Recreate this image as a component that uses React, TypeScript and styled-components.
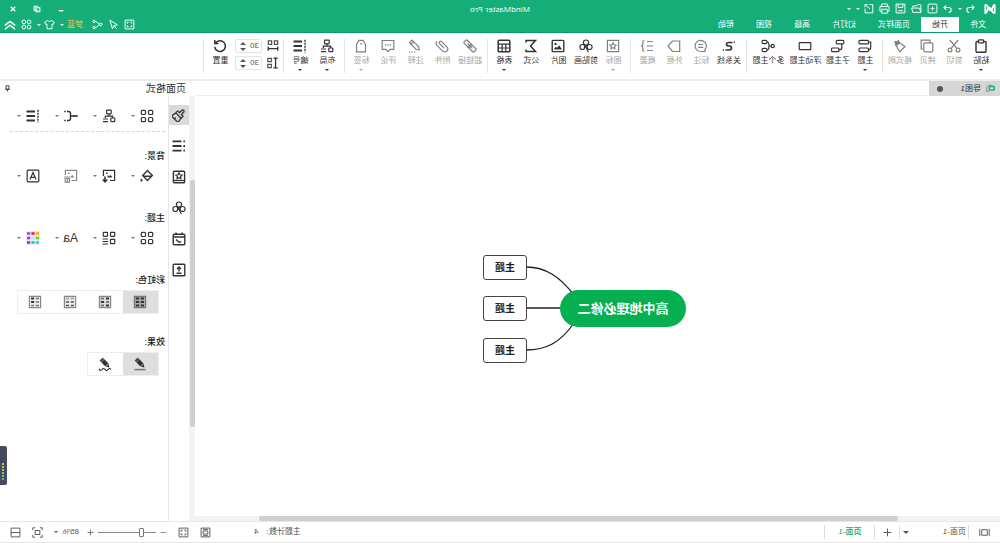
import React from "react";
import styled, { createGlobalStyle, css } from "styled-components";

const GlobalStyle = createGlobalStyle`
  * { box-sizing: border-box; }
  body {
    margin: 0;
    background: #fff;
    color: #333;
    font: 8px/12px "Liberation Sans", "Noto Sans CJK SC", sans-serif;
  }
  button, input, select {
    margin: 0;
    padding: 0;
    border: 0;
    background: none;
    color: inherit;
    font: inherit;
  }
`;

/* ---------- icons, drawn on a 14 unit grid ---------- */

const clover = (
  <>
    <circle cx="7" cy="3.6" r="2.6" />
    <circle cx="3.4" cy="8" r="2.5" />
    <circle cx="10.6" cy="8" r="2.5" />
    <path d="M5 5.500 9 9M9 5.500 6.500 9q-.3 2.500-2 4" />
  </>
);
const fourSquares = (
  <>
    <rect x="1.3" y="1.3" width="4.2" height="4.2" rx="1" />
    <rect x="8.5" y="1.3" width="4.2" height="4.2" rx="1" />
    <rect x="1.3" y="8.5" width="4.2" height="4.2" rx="1" />
    <rect x="8.5" y="8.5" width="4.2" height="4.2" rx="1" />
  </>
);
const orgChart = (
  <>
    <rect x="4.8" y="1.2" width="4.6" height="3.6" rx=".5" />
    <path d="M7 4.8v2.4M3.3 9V7.2h7.4V9M8 10h5M8 12.6h5" />
    <rect x="1.2" y="9" width="4" height="3.6" rx=".5" />
  </>
);
const numbered = (
  <>
    <path strokeWidth="2" d="M5 2.4h8.5M5 7h8.5M5 11.6h8.5" />
    <path strokeWidth="1.4" strokeDasharray="2 1" d="M2 .8v12.6" />
  </>
);
const tableBox = (
  <>
    <rect x="1.200" y="1.200" width="11.600" height="11.600" rx=".8" strokeWidth="1.500" />
    <path d="M1.400 5.200h11.200M1.400 9h11.200M5.200 5v7.600M8.900 5v7.600" />
  </>
);
const chain = (
  <g transform="rotate(-45 7 7)">
    <rect x="0" y="4.8" width="7.6" height="4.4" rx="1" />
    <rect x="6.4" y="4.8" width="7.6" height="4.4" rx="1" />
    <path d="M3.8 7h6.4" />
  </g>
);
const pencil = (
  <>
    <path fill="currentColor" strokeWidth=".6" d="M9.200 1 12 3.600 6.600 9.200 3.800 6.400Z" />
    <path fill="currentColor" stroke="none" d="M3.200 7 6 9.800l-3.400.8Z" />
    <path stroke="#ddd" strokeWidth=".6" d="m8 2.400 2.800 2.700" />
  </>
);
const star = "m7 3.9 1 1.9 2.1.3-1.5 1.5.3 2.1L7 8.7l-1.9 1 .3-2.1-1.5-1.5 2.1-.3Z";
const frame = "M1.4 1.4h11.2v11.2H1.4z";

const ICONS: Record<string, React.ReactNode> = {
  logo: (
    <path
      strokeWidth="2"
      strokeLinejoin="round"
      d="M1.5 2.2v9.6c2 0 3-1.6 4-4s1.6-2.6 3-2.6 1.2 6.6 4 6.6V2.2c-2.2 0-3 1.6-4 4s-1.7 2.6-3 2.6-1.2-6.6-4-6.6Z"
    />
  ),
  redo: <path strokeWidth="1.500" d="M12.500 5H6a3.500 3.500 0 0 0-3.500 3.500Q2.500 11.500 6 12M9.500 1.800 12.700 5l-3.200 3.200" />,
  undo: <path strokeWidth="1.500" d="M1.500 5H8a3.500 3.500 0 0 1 3.500 3.500Q11.500 11.500 8 12M4.500 1.800 1.300 5l3.200 3.200" />,
  newDoc: (
    <>
      <rect x="1.400" y="1.400" width="11.200" height="11.200" rx="1" />
      <path d="M7 4.500v5M4.500 7h5" />
    </>
  ),
  open: <path d="M1.400 12V3q0-1 1-1h3l1.500 1.700h4.700V6M1.400 12l1.800-5.500h10L11.600 12Z" />,
  save: (
    <>
      <path d={frame} />
      <path d="M4 1.400v4.200h6V1.400M4 9.800h6" />
    </>
  ),
  print: (
    <>
      <path d="M3.500 4.500V1.200h7v3.300M3.500 10.500H1.200v-6h11.600v6h-2.300" />
      <path d="M3.500 8h7v5h-7z" />
    </>
  ),
  exportDoc: <path d="M6 2H1.600v10.600h9.800V7M5 7.500 11.500 2M11.500 2H8M11.500 2v3.500" />,
  expand: (
    <>
      <path d={frame} />
      <path d="M4 6V4h2M8 4h2v2M10 8v2H8M6 10H4V8" />
    </>
  ),
  cursor: <path d="m11.500 1.500-9.500 6 4.400.8 2 4.200ZM6.200 8.500l-3 4" />,
  share: (
    <>
      <circle cx="2.800" cy="7" r="1.700" />
      <circle cx="11.500" cy="3" r="1.500" />
      <circle cx="11.500" cy="11" r="1.500" />
      <path d="M4.500 7Q8 3 10 3M4.500 7Q8 11 10 11" />
    </>
  ),
  shirt: <path d="M4.500 2 1 4l1.200 3 1.600-.6V12.500h6.400V6.400l1.600.6L13 4 9.500 2Q7 4.500 4.500 2Z" />,
  circles: (
    <>
      <circle cx="3.700" cy="3.700" r="2.400" />
      <circle cx="10.300" cy="3.700" r="2.400" />
      <circle cx="3.700" cy="10.300" r="2.400" />
      <circle cx="10.300" cy="10.300" r="2.400" />
    </>
  ),
  chevrons: <path strokeWidth="1.700" d="m1 7.500 6-4.700 6 4.700M1 12l6-4.700 6 4.700" />,
  minimize: <path strokeWidth="2.500" d="M3 10h8" />,
  restore: <path strokeWidth="1.800" d="M5 2h7v7H5M2 5h7v7H2z" />,
  close: <path strokeWidth="2.200" d="m3 3 8 8M11 3l-8 8" />,
  paste: (
    <>
      <rect x="2" y="2.500" width="10" height="10.700" rx="1" strokeWidth="1.400" />
      <rect x="4.500" y=".9" width="5" height="3" rx=".6" fill="#fff" />
    </>
  ),
  cut: (
    <>
      <circle cx="3" cy="11" r="1.900" />
      <circle cx="11" cy="11" r="1.900" />
      <path d="m4.200 9.400 7-8.400M9.800 9.400 2.800 1" />
    </>
  ),
  copy: (
    <>
      <rect x="1.200" y="3.800" width="9" height="9" rx="1" />
      <path d="M4 3.500V1.200h8.800V10h-2.400" />
    </>
  ),
  brush: (
    <>
      <path d="m2 7.500 5.600-3.800 3.200 3-3.600 6Z" />
      <path fill="currentColor" d="m7.600 3.600 1-2 1.300 1.500L12 2.500l-.8 3.700Z" />
    </>
  ),
  topic: (
    <>
      <rect x="3.500" y="1.300" width="9.500" height="3.600" rx="1" />
      <rect x="3.500" y="9" width="9.500" height="3.600" rx="1" />
      <path d="M3.500 3H1.300v5.800q0 2 2.200 2" />
    </>
  ),
  subtopic: (
    <>
      <rect x="1.200" y="1.300" width="7.500" height="3.600" rx="1" />
      <rect x="6" y="9" width="7.500" height="3.600" rx="1" />
      <path d="M3.200 5v3.800q0 2 2.800 2" />
    </>
  ),
  floating: <rect x="1.200" y="3.600" width="11.600" height="7" rx=".6" />,
  multiple: (
    <>
      <circle cx="2.300" cy="7" r="1.600" />
      <rect x="8" y="1.300" width="5" height="3.400" rx="1.500" />
      <rect x="8" y="9.300" width="5" height="3.400" rx="1.500" />
      <path d="M4 7h2M8 3Q6 3 6 7t2 4" />
    </>
  ),
  relation: (
    <>
      <path strokeWidth="1.700" d="M3.500 3.500H7q2.500 0 2.500 1.700T7 7 4.500 8.900 7 11h3.500" />
      <path strokeWidth="1.700" d="M1 3h1.200M12 11h1.200" />
    </>
  ),
  callout: (
    <>
      <path d="M3 12.500h4.500A5.600 5.600 0 1 0 3 10.500Z" />
      <path d="M4.800 5.500h5M4.800 8.300h5" />
    </>
  ),
  boundary: <path d="M1.300 2h7.200L13 7l-4.500 5.500H1.300z" />,
  summary: <path d="M1 2.500h6M1 7h6M1 11.500h6M9.500 1.500q1.700 0 1.700 1.700v2q0 1.800 1.800 1.800-1.800 0-1.800 1.800v2q0 1.700-1.700 1.700" />,
  mark: (
    <>
      <path d={frame} />
      <path d={star} />
    </>
  ),
  clipart: clover,
  picture: (
    <>
      <rect x="1.200" y="1.400" width="11.600" height="11.200" rx=".8" strokeWidth="1.400" />
      <path fill="currentColor" stroke="none" d="m3 10.500 2.800-4.200 2.200 2.500 1.400-1 1.800 2.700ZM8.500 4h2v2h-2z" />
    </>
  ),
  formula: <path strokeWidth="1.500" d="M12 3.500V1.500H2.500l5 5.500-5 5.500H12v-2" />,
  table: tableBox,
  link: chain,
  attach: (
    <path
      transform="rotate(-45 7 7)"
      d="M4 7h6.300a1.400 1.400 0 0 0 0-2.800H3a3 3 0 0 0 0 6h8a3 3 0 0 0 2.800-3"
    />
  ),
  note: (
    <g>
      <path d="m10 1.200 2.500 2.300-6.700 7-3 .4.500-3Z" />
      <path d="m8.500 3 2.400 2.200" />
      <path strokeDasharray="1.500 1" d="M6.500 13h7" />
    </g>
  ),
  comment: (
    <>
      <path d="M1.200 1.500h11.600v8.800H9L7 12.600l-2-2.300H1.200z" />
      <path strokeWidth="1.500" strokeDasharray="1.300 1.100" d="M4 6h6" />
    </>
  ),
  tag: (
    <>
      <path d="M2.500 5.500 5 1.400h4l2.500 4.100v7.300h-9z" />
      <path strokeWidth="1.500" d="M7 4v1.500" />
    </>
  ),
  layout: orgChart,
  numbering: numbered,
  reset: <path strokeWidth="1.500" d="M11.400 4A5.400 5.400 0 1 0 12.300 8M12.200 1v3.500H8.600" />,
  hgap: (
    <>
      <rect x="1.500" y="1" width="4" height="4" />
      <rect x="8.500" y="1" width="4" height="4" />
      <path strokeWidth="1.500" d="M1 10h12M1.400 7.500v5M12.600 7.500v5" />
    </>
  ),
  vgap: (
    <>
      <rect x="9" y="1.500" width="4" height="4" />
      <rect x="9" y="8.500" width="4" height="4" />
      <path strokeWidth="1.500" d="M4 1v12M1.500 1.400h5M1.500 12.600h5" />
    </>
  ),
  pin: <path strokeWidth="1.800" d="M4 1.500h6v7H4zM2.500 8.700h9M7 9v4" />,
  doc: (
    <>
      <path stroke="#777" d="M4 3q2-2 5-1.500 4 1 4 5v5H9" />
      <rect x="1.200" y="4" width="7.600" height="5.500" rx="1" stroke="#12ae76" strokeWidth="2.200" />
    </>
  ),
  formatBrush: (
    <g transform="rotate(-45 7 7)" strokeWidth="1.300" strokeLinejoin="round">
      <path d="M5.700 5V1.200q1.300-1.600 2.600 0V5h2.500v2.800H3.200V5z" />
      <path d="M3.400 8 2.200 13h9.600L10.600 8M7.500 11v2" />
    </g>
  ),
  list: (
    <>
      <path strokeWidth="1.900" d="M4.500 2.400h9M4.500 7h9M4.500 11.600h9" />
      <path strokeWidth="1.900" d="M1 2.400h1.600M1 7h1.600M1 11.600h1.600" />
    </>
  ),
  starBook: (
    <>
      <rect x="1.400" y="1.200" width="11.200" height="11.600" rx="1" strokeWidth="1.400" />
      <path d={star} transform="translate(0 -1)" />
      <path d="M1.400 10.500h11.200" />
    </>
  ),
  calendar: (
    <>
      <rect x="1.200" y="2.200" width="11.600" height="10.600" rx="1.200" strokeWidth="1.400" />
      <path strokeWidth="1.400" d="M1.200 5h11.600M4 .6v2M10 .6v2M4.800 9.500 6.500 10.500 10 7.500" />
    </>
  ),
  upload: (
    <>
      <rect x="1.200" y="1.200" width="11.600" height="11.600" rx=".8" strokeWidth="1.400" />
      <path strokeWidth="1.400" d="M7 8.500V4.200M5 6l2-2 2 2M4.500 10.200h5" />
    </>
  ),
  grid: fourSquares,
  branch: (
    <>
      <path strokeWidth="1.400" d="M1 7h6M11 2.500H9.500q-2 0-2 2v5q0 2 2 2H11" />
      <path strokeWidth="1.700" d="M.2 7h1.600M12.200 2.500h1.600M12.200 11.500h1.600M4 6.200v1.600" />
    </>
  ),
  fill: (
    <>
      <path strokeWidth="1.400" d="m6.500 1.500 4.800 5-4.800 5-4.800-5Z" />
      <path fill="currentColor" stroke="none" d="M1.700 6.500h9.600L10 8H3Z" />
      <path strokeWidth="1.800" d="M12.500 10v2.500" />
    </>
  ),
  imageDown: (
    <>
      <path d="M6 11.500H1.400V1.400h11.200V7" />
      <path fill="currentColor" stroke="none" d="M3.500 8.500 5.500 6l1.600 1.300L8.500 6v2.500ZM8.500 3.600H10v1.500H8.500z" />
      <path strokeWidth="1.600" d="M11 7.500v5M8.800 10.500l2.200 2.300 2.200-2.300" />
    </>
  ),
  imageTrash: (
    <>
      <path d="M6.500 11.500H1.400V1.400h11.200V6" />
      <path fill="currentColor" stroke="none" d="M3.500 8.500 5.500 6l1.600 1.300V8.500ZM8.500 3.600H10v1.500H8.500z" />
      <path d="M7.500 8h6.300M8.500 9.500h4.300v3.700H8.500zM10.600 10v3" />
    </>
  ),
  letterA: (
    <>
      <rect x="1.200" y="1.200" width="11.600" height="11.600" rx=".8" />
      <path d="m4 10.500 3-7 3 7M5 8.300h4" />
    </>
  ),
  themeList: (
    <>
      <rect x="1.300" y="1.300" width="4.200" height="4" rx=".5" />
      <rect x="8.500" y="1.300" width="4.200" height="4" rx=".5" />
      <rect x="1.300" y="8.300" width="4.200" height="4.400" rx=".5" />
      <path d="M8 8h5.500M8 10.500h5.500M8 13h5.500" />
    </>
  ),
  palette: (
    <g strokeWidth="2.600">
      <path stroke="#ececec" strokeWidth="14" d="M0 7h14" />
      <path stroke="#f7b500" d="M1 2.500h3.200" /><path stroke="#ea1f3c" d="M5.400 2.500h3.200" /><path stroke="#b83cd8" d="M9.800 2.500H13" />
      <path stroke="#5fd52b" d="M1 7h3.200" /><path stroke="#d8d8ee" d="M5.400 7h3.200" /><path stroke="#7d4be6" d="M9.800 7H13" />
      <path stroke="#35cfd9" d="M1 11.500h3.200" /><path stroke="#22b8f0" d="M5.400 11.500h3.200" /><path stroke="#2b62ee" d="M9.800 11.500H13" />
    </g>
  ),
  rainbow1: (
    <>
      <path stroke="#777" fill="#aaa" d={frame} />
      <path strokeWidth="2.200" d="M3 3.500h3.300M7.900 3.500h3.300M3 7h3.300M7.900 7h3.300M3 10.500h3.300M7.900 10.500h3.300" />
    </>
  ),
  rainbow2: (
    <>
      <path stroke="#888" fill="#ddd" d={frame} />
      <path strokeWidth="2.200" d="M3 3.500h3M7.900 7h3.300M3 10.500h3" />
      <path stroke="#777" strokeWidth="2" d="M7.900 3.500h3.300M3 7h3M7.900 10.500h3.300" />
    </>
  ),
  rainbow3: (
    <>
      <path stroke="#888" fill="#eee" d={frame} />
      <path stroke="#aaa" strokeWidth="2" d="M3 3.500h3.300M7.900 3.500h3.300" />
      <path stroke="#555" strokeWidth="1.700" d="M3 7h3.300M7.900 7h3.300M3 10.500h3.300M7.900 10.500h3.300" />
    </>
  ),
  rainbow4: (
    <>
      <path stroke="#888" fill="#eee" d={frame} />
      <path strokeWidth="2.200" d="M7.900 3.500h3M7.900 7h3" />
      <path stroke="#777" strokeWidth="1.700" d="M3 3.500h3.300M3 7h3.300M3 10.500h3.300M7.900 10.500h3" />
    </>
  ),
  penLine: (
    <>
      {pencil}
      <path stroke="#777" strokeWidth="1.500" d="M1.500 12.600h11" />
    </>
  ),
  penWave: (
    <>
      {pencil}
      <path d="M1 12.500q1.500-2 3 0t3 0 3 0 3-.6" />
    </>
  ),
  pages: <path d="M1 2.500v9M13 2.500v9M3.500 3.500h7v7h-7z" />,
  add: <path strokeWidth="1.500" d="M7 1v12M1 7h12" />,
  minus: <path d="M1 7h12" />,
  fitPage: (
    <>
      <path d={frame} />
      <path d="M4 5h6v4H4zM4 3h6M4 11h6" />
    </>
  ),
  focus: (
    <>
      <path d="M1 4V1h3M10 1h3v3M13 10v3h-3M4 13H1v-3" />
      <rect x="4" y="4.500" width="6" height="5" />
    </>
  ),
  fitWidth: (
    <>
      <path d={frame} />
      <path d="M1.400 7h11.200" />
    </>
  ),
};

const Svg = styled.svg<{ $size: number }>`
  display: block;
  flex: none;
  width: ${(p) => p.$size}px;
  height: ${(p) => p.$size}px;
  fill: none;
  stroke: currentColor;
  stroke-width: 1.200;
`;

function Icon({ name, size = 14 }: { name: string; size?: number }) {
  return (
    <Svg viewBox="0 0 14 14" $size={size} aria-hidden="true">
      {ICONS[name]}
    </Svg>
  );
}

const Caret = styled.span<{ $size?: number }>`
  flex: none;
  width: 0;
  height: 0;
  border: ${(p) => p.$size ?? 2}px solid transparent;
  border-bottom: 0;
  border-top-color: currentColor;
`;

/* ---------- window frame ---------- */

/* The whole window is shown as a mirror image. */
const Window = styled.div`
  display: flex;
  flex-direction: column;
  min-height: 100vh;
  position: relative;
  transform: scaleX(-1);
  background: #fff;
`;

const Header = styled.header`
  background: #15ae79;
  border-bottom: 1px solid #0a9c68;
  color: #fff;
`;

const TitleBar = styled.div`
  display: grid;
  grid-template-columns: 1fr auto 1fr;
  align-items: center;
  height: 17px;
`;

const Title = styled.h1`
  margin: 0;
  font: 400 8px/16px "Open Sans", sans-serif;
`;

const QuickTools = styled.div`
  display: flex;
  align-items: center;
  gap: 5px;
  padding-left: 4px;
`;

const Logo = styled.span`
  margin-right: 4px;
`;

const WindowTools = styled.div`
  display: flex;
  justify-content: flex-end;
  gap: 16px;
  padding-right: 9px;
`;

const PlainButton = styled.button`
  display: flex;
  align-items: center;
  gap: 3px;
`;

const MenuBar = styled.nav`
  display: flex;
  justify-content: space-between;
  align-items: stretch;
  height: 15px;
`;

const MenuTabs = styled.div`
  display: flex;
  padding-left: 3px;
`;

const MenuTab = styled.button<{ $active?: boolean }>`
  padding: 0 11px;
  line-height: 15px;
  ${(p) => p.$active && css`
    background: #fff;
    color: #333;
  `}
`;

const MenuTools = styled.div`
  display: flex;
  align-items: center;
  gap: 5px;
  padding-right: 4px;
`;

const Account = styled(PlainButton)`
  margin-left: 4px;
  color: #f2c14e;
  span { color: #fff; }
`;

/* ---------- ribbon ---------- */

const Ribbon = styled.div`
  display: flex;
  height: 48px;
  padding: 6px 0 6px 2px;
  border-bottom: 2px solid #ececec;
`;

const RibbonGroup = styled.div`
  display: flex;
  padding: 0 3px;
  border-right: 1px solid #e3e3e3;
`;

const RibbonItem = styled.button<{ $chars: number }>`
  display: flex;
  flex-direction: column;
  align-items: center;
  width: ${(p) => (p.$chars > 3 ? 37 : p.$chars > 2 ? 28 : 27)}px;
  line-height: 16px;
  white-space: nowrap;
  &:disabled { color: #a5a5a5; }
  &:disabled svg { color: #808080; }
`;

const SpacingFields = styled.div`
  display: flex;
  flex-direction: column;
  gap: 3px;
  padding: 0 1px;
`;

const SpacingField = styled.label`
  display: flex;
  align-items: center;
  gap: 5px;
`;

const Spinner = styled.span`
  display: flex;
  align-items: center;
  width: 27px;
  height: 14px;
  padding: 0 4px 0 2px;
  border: 1px solid #e4e4e4;
  border-radius: 2px;
  color: #555;
  input { flex: 1; min-width: 0; line-height: 12px; }
`;

const Arrows = styled.span`
  display: flex;
  flex-direction: column;
  gap: 3px;
  span:first-child { transform: rotate(180deg); }
`;

/* ---------- document area ---------- */

const Body = styled.div`
  display: flex;
  flex: 1;
`;

const Workspace = styled.main`
  display: flex;
  flex: 1;
  flex-direction: column;
  min-width: 0;
`;

const DocTabs = styled.div`
  height: 15px;
  border-bottom: 1px solid #eee;
`;

const DocTab = styled.button`
  display: flex;
  align-items: center;
  gap: 5px;
  width: 71px;
  height: 15px;
  padding: 0 8px 0 5px;
  background: #d6d6d6;
`;

const Dot = styled.span`
  width: 6px;
  height: 6px;
  margin-left: auto;
  border-radius: 50%;
  background: #555;
`;

const Canvas = styled.div`
  position: relative;
  flex: 1;
  overflow: hidden;
`;

const Links = styled.svg`
  position: absolute;
  left: 0;
  top: 0;
  width: 600px;
  height: 400px;
  fill: none;
  stroke: #222;
  stroke-width: 1.300;
`;

const Topic = styled.div<{ $x: number; $y: number }>`
  position: absolute;
  left: ${(p) => p.$x}px;
  top: ${(p) => p.$y}px;
  width: 44px;
  border: 1px solid #444;
  border-radius: 3px;
  background: #fff;
  color: #222;
  font-size: 10px;
  font-weight: 700;
  line-height: 23px;
  text-align: center;
`;

const CentralTopic = styled(Topic)`
  width: 126px;
  border: 0;
  border-radius: 19px;
  background: #06b050;
  color: #fff;
  font-size: 13px;
  line-height: 37px;
`;

const HScroll = styled.div`
  height: 5px;
  padding: 0 8% 0 12.700%;
  background: #f2f2f2;
`;

const Thumb = styled.div`
  height: 100%;
  border-radius: 2px;
  background: #cfcfcf;
`;

/* ---------- side panel ---------- */

const Side = styled.aside`
  display: flex;
  flex: none;
  flex-direction: column;
  width: 195px;
`;

const SideHeader = styled.div`
  display: flex;
  align-items: center;
  justify-content: space-between;
  height: 15px;
  padding: 0 4px 0 9px;
  font-size: 10px;
`;

const SideBody = styled.div`
  display: flex;
  flex: 1;
`;

const VScroll = styled.div`
  flex: none;
  width: 6px;
  padding: 84px 1px 94px 0;
  background: #f3f3f3;
`;

const ToolRail = styled.div`
  display: flex;
  flex: none;
  flex-direction: column;
  gap: 11px;
  width: 21px;
  padding-top: 9px;
  border-right: 1px solid #e6e6e6;
`;

const RailButton = styled.button<{ $active?: boolean }>`
  display: grid;
  place-items: center;
  width: 20px;
  height: 20px;
  background: ${(p) => (p.$active ? "#d9d9d9" : "none")};
`;

const Panel = styled.div`
  flex: 1;
  min-width: 0;
  padding: 9px 10px 0 3px;
`;

const ToolRow = styled.div`
  display: grid;
  grid-template-columns: repeat(3, 38px) auto;
  justify-content: start;
  padding: 6px 0 0 10px;
`;

const TopTools = styled(ToolRow)`
  height: 27px;
  padding-top: 3px;
  margin-bottom: 18px;
  border-bottom: 1px dashed #d5d5d5;
`;

const ToolButton = styled.button<{ $muted?: boolean }>`
  display: flex;
  align-items: center;
  gap: 5px;
  height: 16px;
  padding-left: 1px;
  color: ${(p) => (p.$muted ? "#888" : "#333")};
  span { color: #777; }
`;

const FontSample = styled.b`
  width: 14px;
  font: 400 12px/16px "Liberation Sans", sans-serif;
`;

const Section = styled.section`
  min-height: 62px;
`;

const SectionTitle = styled.h2`
  margin: 0;
  color: #222;
  font-size: 9px;
  font-weight: 500;
  line-height: 12px;
`;

const Segments = styled.div`
  display: flex;
  width: max-content;
  margin: 4px 0 0 6px;
  border: 1px solid #eee;
`;

const Segment = styled.button<{ $active?: boolean }>`
  display: grid;
  place-items: center;
  width: 35px;
  height: 22px;
  background: ${(p) => (p.$active ? "#dedede" : "none")};
`;

/* ---------- status bar ---------- */

const StatusBar = styled.footer`
  display: flex;
  align-items: stretch;
  justify-content: space-between;
  height: 22px;
  border: solid #e6e6e6;
  border-width: 1px 0;
  color: #555;
`;

const StatusPart = styled.div`
  display: flex;
  align-items: center;
`;

const StatusCell = styled.div<{ $width: number }>`
  display: flex;
  align-items: center;
  justify-content: center;
  width: ${(p) => p.$width}px;
  height: 14px;
  padding: 0 3px 0 2px;
  border-right: 1px solid #ddd;
`;

const PageSelect = styled.select`
  flex: 1;
  appearance: none;
`;

const PageLink = styled.button`
  color: #12a56f;
  font-weight: 500;
`;

const StatusTools = styled(StatusPart)`
  gap: 11px;
  padding-right: 10px;
`;

const Count = styled.span`
  display: flex;
  gap: 8px;
  margin-right: 32px;
`;

const ZoomGroup = styled.div`
  display: flex;
  align-items: center;
  gap: 4px;
`;

const ZoomSlider = styled.input`
  appearance: none;
  width: 58px;
  height: 12px;
  background: linear-gradient(#888, #888) center / 100% 1px no-repeat;
  &::-webkit-slider-thumb {
    appearance: none;
    width: 5px;
    height: 9px;
    border: 1px solid #777;
    border-radius: 1px;
    background: #fff;
  }
`;

const ZoomValue = styled(PlainButton)`
  gap: 5px;
  margin-left: 4px;
`;

const Meter = styled.div`
  position: absolute;
  right: 0;
  bottom: 58px;
  display: flex;
  align-items: flex-end;
  width: 7px;
  height: 39px;
  padding: 4px 2px;
  border-radius: 2px 0 0 2px;
  background: #454b5c;
  &::after {
    content: "";
    width: 3px;
    height: 18px;
    margin-left: 1px;
    background: repeating-linear-gradient(transparent 0 2px, #454b5c 2px 3px), linear-gradient(#c9c93c, #38c494);
  }
`;

/* ---------- data ---------- */

type Item = { icon: string; label: string; off?: boolean; menu?: boolean };

const RIBBON: Item[][] = [
  [
    { icon: "paste", label: "粘贴", menu: true },
    { icon: "cut", label: "剪切", off: true },
    { icon: "copy", label: "拷贝", off: true },
    { icon: "brush", label: "格式刷", off: true },
  ],
  [
    { icon: "topic", label: "主题", menu: true },
    { icon: "subtopic", label: "子主题" },
    { icon: "floating", label: "浮动主题" },
    { icon: "multiple", label: "多个主题" },
  ],
  [
    { icon: "relation", label: "关系线" },
    { icon: "callout", label: "标注", off: true },
    { icon: "boundary", label: "外框", off: true },
    { icon: "summary", label: "概要", off: true },
  ],
  [
    { icon: "mark", label: "图标", off: true, menu: true },
    { icon: "clipart", label: "剪贴画" },
    { icon: "picture", label: "图片" },
    { icon: "formula", label: "公式" },
    { icon: "table", label: "表格", menu: true },
  ],
  [
    { icon: "link", label: "超链接", off: true },
    { icon: "attach", label: "附件", off: true },
    { icon: "note", label: "注释", off: true },
    { icon: "comment", label: "评论", off: true },
    { icon: "tag", label: "标签", off: true, menu: true },
  ],
  [
    { icon: "layout", label: "布局", menu: true },
    { icon: "numbering", label: "编号", menu: true },
  ],
];

const MENUS = ["文件", "开始", "页面样式", "幻灯片", "高级", "视图", "帮助"];
const RAIL = ["formatBrush", "list", "starBook", "clipart", "calendar", "upload"];

function RibbonButton({ icon, label, off, menu }: Item) {
  return (
    <RibbonItem $chars={label.length} disabled={off}>
      <Icon name={icon} />
      {label}
      {menu && <Caret />}
    </RibbonItem>
  );
}

function SpacingInput({ icon, name }: { icon: string; name: string }) {
  return (
    <SpacingField>
      <Icon name={icon} size={12} />
      <Spinner>
        <input aria-label={name} defaultValue="30" />
        <Arrows><Caret $size={3} /><Caret $size={3} /></Arrows>
      </Spinner>
    </SpacingField>
  );
}

function Tool({ icon, menu = true, muted }: { icon: string; menu?: boolean; muted?: boolean }) {
  return (
    <ToolButton $muted={muted} aria-label={icon}>
      {icon === "font" ? <FontSample>Aa</FontSample> : <Icon name={icon} />}
      {menu && <Caret />}
    </ToolButton>
  );
}

export default function App() {
  return (
    <>
      <GlobalStyle />
      <Window lang="zh-CN">
        <Header>
          <TitleBar>
            <QuickTools>
              <Logo><Icon name="logo" size={12} /></Logo>
              <PlainButton aria-label="撤销"><Icon name="undo" size={10} /><Caret /></PlainButton>
              <PlainButton aria-label="重做"><Icon name="redo" size={10} /></PlainButton>
              {["newDoc", "open", "save", "print"].map((n) => (
                <PlainButton key={n} aria-label={n}><Icon name={n} size={11} /></PlainButton>
              ))}
              <PlainButton aria-label="导出"><Icon name="exportDoc" size={11} /><Caret /></PlainButton>
              <PlainButton aria-label="更多"><Caret /></PlainButton>
            </QuickTools>
            <Title>MindMaster Pro</Title>
            <WindowTools>
              {["minimize", "restore", "close"].map((n) => (
                <PlainButton key={n} aria-label={n}><Icon name={n} size={8} /></PlainButton>
              ))}
            </WindowTools>
          </TitleBar>
          <MenuBar>
            <MenuTabs>
              {MENUS.map((m) => <MenuTab key={m} $active={m === "开始"}>{m}</MenuTab>)}
            </MenuTabs>
            <MenuTools>
              <PlainButton aria-label="全屏"><Icon name="expand" size={11} /></PlainButton>
              <PlainButton aria-label="选择"><Icon name="cursor" size={11} /></PlainButton>
              <PlainButton aria-label="分享"><Icon name="share" size={11} /></PlainButton>
              <Account>梦蓝<Caret /></Account>
              <PlainButton aria-label="皮肤"><Icon name="shirt" size={11} /><Caret /></PlainButton>
              <PlainButton aria-label="应用"><Icon name="circles" size={11} /></PlainButton>
              <PlainButton aria-label="收起"><Icon name="chevrons" size={12} /></PlainButton>
            </MenuTools>
          </MenuBar>
        </Header>

        <Ribbon>
          {RIBBON.map((group) => (
            <RibbonGroup key={group[0].label}>
              {group.map((item) => <RibbonButton key={item.label} {...item} />)}
            </RibbonGroup>
          ))}
          <RibbonGroup>
            <SpacingFields>
              <SpacingInput icon="hgap" name="水平间距" />
              <SpacingInput icon="vgap" name="垂直间距" />
            </SpacingFields>
            <RibbonButton icon="reset" label="重置" />
          </RibbonGroup>
        </Ribbon>

        <Body>
          <Workspace>
            <DocTabs>
              <DocTab><Icon name="doc" size={9} />导图1<Dot /></DocTab>
            </DocTabs>
            <Canvas>
              <Links>
                <path d="M474 171C454 171 440 181 426 199M440 212H474M474 254C454 254 440 247 426 227" />
              </Links>
              <CentralTopic $x={314} $y={194}>高中地理必修二</CentralTopic>
              <Topic $x={473} $y={159}>主题</Topic>
              <Topic $x={473} $y={200}>主题</Topic>
              <Topic $x={473} $y={242}>主题</Topic>
            </Canvas>
            <HScroll><Thumb /></HScroll>
          </Workspace>

          <Side>
            <SideHeader>页面格式<Icon name="pin" size={7} /></SideHeader>
            <SideBody>
              <VScroll><Thumb /></VScroll>
              <ToolRail>
                {RAIL.map((n, i) => (
                  <RailButton key={n} $active={i === 0} aria-label={n}><Icon name={n} /></RailButton>
                ))}
              </ToolRail>
              <Panel>
                <TopTools>
                  <Tool icon="grid" />
                  <Tool icon="layout" />
                  <Tool icon="branch" />
                  <Tool icon="numbering" />
                </TopTools>
                <Section>
                  <SectionTitle>背景:</SectionTitle>
                  <ToolRow>
                    <Tool icon="fill" />
                    <Tool icon="imageDown" />
                    <Tool icon="imageTrash" menu={false} muted />
                    <Tool icon="letterA" />
                  </ToolRow>
                </Section>
                <Section>
                  <SectionTitle>主题:</SectionTitle>
                  <ToolRow>
                    <Tool icon="grid" />
                    <Tool icon="themeList" />
                    <Tool icon="font" />
                    <Tool icon="palette" />
                  </ToolRow>
                </Section>
                <Section>
                  <SectionTitle>彩虹色:</SectionTitle>
                  <Segments>
                    {["rainbow1", "rainbow2", "rainbow3", "rainbow4"].map((n, i) => (
                      <Segment key={n} $active={i === 0} aria-label={n}><Icon name={n} /></Segment>
                    ))}
                  </Segments>
                </Section>
                <Section>
                  <SectionTitle>效果:</SectionTitle>
                  <Segments>
                    <Segment $active aria-label="直线"><Icon name="penLine" /></Segment>
                    <Segment aria-label="手绘"><Icon name="penWave" /></Segment>
                  </Segments>
                </Section>
              </Panel>
            </SideBody>
          </Side>
        </Body>

        <StatusBar>
          <StatusPart>
            <StatusCell $width={32}><Icon name="pages" size={11} /></StatusCell>
            <StatusCell $width={69}>
              <PageSelect aria-label="页面"><option>页面-1</option></PageSelect>
              <Caret $size={3} />
            </StatusCell>
            <StatusCell $width={25}><PlainButton aria-label="添加页面"><Icon name="add" size={9} /></PlainButton></StatusCell>
            <StatusCell $width={50}><PageLink>页面-1</PageLink></StatusCell>
          </StatusPart>
          <StatusTools>
            <Count><span>主题计数:</span><span>4</span></Count>
            <PlainButton aria-label="适合页面"><Icon name="fitPage" size={11} /></PlainButton>
            <PlainButton aria-label="全屏"><Icon name="expand" size={11} /></PlainButton>
            <ZoomGroup>
              <PlainButton aria-label="缩小"><Icon name="minus" size={7} /></PlainButton>
              <ZoomSlider type="range" aria-label="缩放" min={0} max={100} defaultValue={23} />
              <PlainButton aria-label="放大"><Icon name="add" size={7} /></PlainButton>
              <ZoomValue>85%<Caret /></ZoomValue>
            </ZoomGroup>
            <PlainButton aria-label="聚焦"><Icon name="focus" size={11} /></PlainButton>
            <PlainButton aria-label="适合宽度"><Icon name="fitWidth" size={11} /></PlainButton>
          </StatusTools>
        </StatusBar>
        <Meter />
      </Window>
    </>
  );
}
